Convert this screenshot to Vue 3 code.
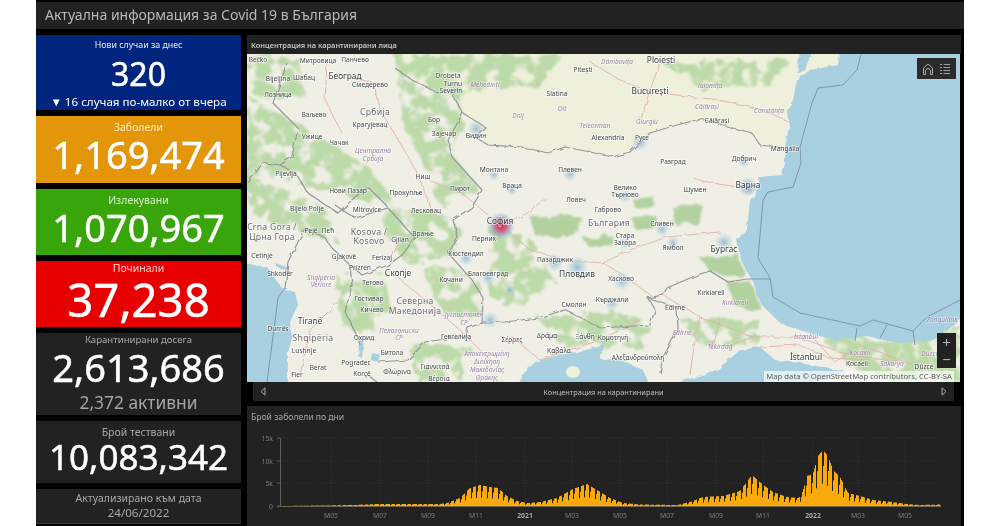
<script setup>
// числа от таблото
const cards = [
  { cls: 'blue', label: 'Нови случаи за днес', value: '320', sub: '▼ 16 случая по-малко от вчера' },
  { cls: 'orange', label: 'Заболели', value: '1,169,474' },
  { cls: 'green', label: 'Излекувани', value: '1,070,967' },
  { cls: 'red', label: 'Починали', value: '37,238' },
  { cls: 'dark quarantine', label: 'Карантинирани досега', value: '2,613,686', sub: '2,372 активни' },
  { cls: 'dark tested', label: 'Брой тествани', value: '10,083,342' },
]

// етикети на картата: x, y, текст, вид (c - град, b - голям, p - област)
const labels = [
  [258, 59, 'Bečko', 'c'], [318, 60, 'Митровица', 'c'], [355, 59, 'Панчево', 'c'], [345, 75, 'Београд', 'm'],
  [370, 84, 'Смедерево', 'c'], [278, 78, 'Bijeljina', 'c'], [304, 77, 'Шабац', 'c'], [278, 94, 'Лозница', 'c'],
  [314, 114, 'Ваљево', 'c'], [375, 112, 'Србија', 'b'], [370, 124, 'Крагујевац', 'c'], [312, 136, 'Ужице', 'c'],
  [339, 142, 'Чачак', 'c'], [373, 150, 'Централна', 'p'], [373, 158, 'Србија', 'p'], [423, 176, 'Ниш', 'c'],
  [406, 192, 'Прокупље', 'c'], [460, 188, 'Пирот', 'c'], [426, 210, 'Лесковац', 'c'], [348, 190, 'Нови Пазар', 'c'],
  [367, 209, 'Mitrovice', 'c'], [307, 208, 'Bijelo Polje', 'c'], [286, 173, 'Pljevlja', 'c'], [434, 119, 'Бор', 'c'],
  [444, 133, 'Зајечар', 'c'], [476, 135, 'Видин', 'c'], [448, 75, 'Drobeta', 'c'], [453, 83, 'Turnu', 'c'],
  [485, 84, 'Mehedinți', 'p'], [451, 90, 'Severin', 'c'], [518, 115, 'Dolj', 'p'], [557, 93, 'Slatina', 'c'],
  [562, 108, 'Olt', 'p'], [595, 125, 'Teleorman', 'p'], [608, 137, 'Alexandria', 'c'], [494, 169, 'Монтана', 'c'],
  [570, 169, 'Плевен', 'c'], [512, 185, 'Враца', 'c'], [576, 199, 'Ловеч', 'c'], [661, 59, 'Ploiești', 'm'],
  [617, 61, 'Dâmbovița', 'p'], [583, 69, 'Pitești', 'c'], [650, 90, 'București', 'm'], [710, 85, 'Ialomița', 'p'],
  [707, 106, 'Călărași', 'p'], [717, 120, 'Călărași', 'c'], [647, 121, 'Giurgiu', 'p'], [642, 137, 'Русе', 'c'],
  [673, 161, 'Разград', 'c'], [744, 158, 'Добрич', 'c'], [748, 184, 'Варна', 'm'], [625, 187, 'Велико', 'c'],
  [625, 194, 'Търново', 'c'], [695, 189, 'Шумен', 'c'], [785, 148, 'Mangalia', 'c'], [769, 110, 'Constanța', 'p'],
  [608, 209, 'Габрово', 'c'], [609, 223, 'България', 'b'], [662, 223, 'Сливен', 'c'], [625, 235, 'Стара', 'c'],
  [625, 242, 'Загора', 'c'], [673, 247, 'Ямбол', 'c'], [724, 248, 'Бургас', 'm'], [577, 273, 'Пловдив', 'm'],
  [555, 259, 'Пазарджик', 'c'], [621, 278, 'Хасково', 'c'], [612, 299, 'Кърджали', 'c'], [500, 220, 'София', 'm'],
  [484, 238, 'Перник', 'c'], [466, 253, 'Кюстендил', 'c'], [488, 273, 'Благоевград', 'c'], [574, 304, 'Смолян', 'c'],
  [272, 227, 'Crna Gora /', 'b'], [272, 237, 'Црна Гора', 'b'], [311, 230, 'Pejë', 'c'], [328, 230, 'Пећ', 'c'],
  [369, 232, 'Kosova /', 'b'], [369, 241, 'Kosovo', 'b'], [400, 239, 'Gjilan', 'c'], [423, 233, 'Врање', 'c'],
  [262, 255, 'Cetinje', 'c'], [344, 256, 'Gjakovë', 'c'], [382, 257, 'Ferizaj', 'c'], [360, 267, 'Prizren', 'c'],
  [398, 272, 'Скопје', 'm'], [280, 273, 'Shkodër', 'c'], [321, 277, 'Shqipëria', 'p'], [321, 284, 'Veriore', 'p'],
  [373, 282, 'Тетово', 'c'], [451, 279, 'Кочани', 'c'], [369, 298, 'Гостивар', 'c'], [415, 301, 'Северна', 'b'],
  [415, 311, 'Македонија', 'b'], [372, 309, 'Кичево', 'c'], [464, 314, 'Југоисточен', 'p'], [464, 322, 'СР', 'p'],
  [310, 320, 'Tiranë', 'm'], [278, 328, 'Durrës', 'c'], [313, 338, 'Shqipëria', 'b'], [399, 330, 'Пелагониски', 'p'],
  [399, 337, 'СР', 'p'], [364, 337, 'Охрид', 'c'], [456, 336, 'Гевгелија', 'c'], [304, 350, 'Lushnje', 'c'],
  [392, 352, 'Битола', 'c'], [318, 367, 'Berat', 'c'], [356, 362, 'Pogradec', 'c'], [435, 366, 'Γιαννιτσά', 'c'],
  [397, 371, 'Φλώρινα', 'c'], [297, 374, 'Fier', 'c'], [362, 373, 'Korçë', 'c'], [439, 378, 'Βέροια', 'c'],
  [487, 353, 'Αποκεντρωμένη', 'p'], [487, 361, 'Διοίκηση', 'p'], [487, 369, 'Μακεδονίας', 'p'], [487, 377, 'Θράκης', 'p'],
  [547, 335, 'Δράμα', 'c'], [585, 336, 'Ξάνθη', 'c'], [512, 339, 'Σέρρες', 'c'], [559, 350, 'Καβάλα', 'c'],
  [711, 292, 'Kırklareli', 'c'], [735, 302, 'Kırklareli', 'p'], [675, 307, 'Edirne', 'c'], [682, 332, 'Edirne', 'p'],
  [720, 346, 'Tekirdağ', 'p'], [613, 337, 'Κομοτηνή', 'c'], [638, 357, 'Αλεξανδρούπολη', 'c'], [806, 336, 'İstanbul', 'p'],
  [806, 356, 'İstanbul', 'm'], [860, 352, 'Kocaeli', 'p'], [857, 363, 'Kocaeli', 'c'], [892, 363, 'Sakarya', 'p'],
  [924, 366, 'Düzce', 'c'], [930, 353, 'Düzce', 'p'], [942, 319, 'Zonguldak', 'p'],
]

const greens = [
  'M395 54 L560 54 L540 85 L490 88 L458 92 L465 125 L448 150 L478 185 L440 205 L425 165 L405 130 L400 100Z',
  'M247 95 L300 125 L340 150 L380 175 L395 215 L345 195 L300 185 L247 175Z',
  'M247 54 L300 60 L305 95 L262 100 L247 90Z',
  'M247 175 L325 208 L340 245 L292 228 L250 218Z',
  'M385 205 L460 218 L455 255 L405 262 L385 235Z',
  'M335 275 L385 275 L390 305 L365 340 L340 325Z',
  'M420 265 L475 272 L485 320 L445 316Z',
  'M410 345 L470 345 L460 378 L415 380Z',
  'M490 228 L530 238 L556 282 L525 305 L492 300Z',
  'M660 62 L790 60 L770 85 L700 88Z',
  'M680 320 L760 320 L760 345 L700 345Z',
  'M820 340 L960 325 L960 382 L870 380Z',
  'M540 320 L610 310 L650 325 L640 345 L560 345Z',
]
const darks = [
  'M530 217 L580 216 L578 230 L560 238 L535 235Z',
  'M583 238 L612 236 L614 246 L590 248Z',
  'M632 217 L656 216 L655 228 L634 228Z',
  'M673 208 L703 205 L702 222 L675 224Z',
  'M633 200 L653 196 L652 207 L636 209Z',
  'M700 258 L740 255 L744 277 L710 272Z',
  'M727 284 L752 282 L762 312 L735 306Z',
]

const borders = [
  'M475 137 L488 145 L522 147 L548 153 L565 147 L590 152 L612 157 L630 152 L650 133 L677 125 L700 119 L717 123 L733 128 L752 133 L760 145 L785 148',
  'M395 68 L412 80 L438 93 L458 90 L452 95 L463 113 L485 127 L475 137',
  'M463 113 L448 140 L452 157 L482 190 L472 207 L453 220 L458 238 L448 253 L472 280 L483 298 L482 323 L505 322 L538 318 L565 310 L600 328 L650 325 L655 310 L648 298 L663 295 L667 288 L697 275 L710 271 L728 282 L747 279',
  'M648 298 L677 307 L678 330 L663 357 L660 373',
  'M482 323 L468 328 L466 336 L425 342 L408 360 L378 362',
  'M360 345 L358 338 L345 312 L352 285 L350 265 L332 248 L325 238 L305 228 L288 262 L285 288',
  'M248 183 L263 163 L280 165 L295 173 L308 193 L338 213 L355 197 L368 187 L388 207',
  'M287 63 L273 103 L298 128 L292 157 L280 165',
  'M335 205 L355 218 L388 208 L415 238 L402 255 L388 265 L362 275 L350 265',
  'M368 375 L377 382',
]
const seaLines = [
  'M861 54 L857 70 L843 85 L818 88 L812 103 L800 147 L801 163 L793 187 L768 192 L763 200 L758 258 L770 278 L773 297 L800 313 L860 326 L873 320 L913 331 L927 317 L960 300',
  'M747 279 L770 279',
  'M285 288 L278 298 L267 382',
  'M857 328 L855 341 M887 325 L880 338 M913 331 L915 345',
]
const roads = [
  'M327 63 L325 100 L342 133', 'M345 75 L373 83 L382 113 L412 163 L420 180 L430 207 L437 217',
  'M423 178 L462 193 L488 215', 'M507 230 L530 250 L563 260 L603 263 L620 273 L653 297 L663 295',
  'M603 263 L630 250 L667 237 L720 232', 'M507 225 L527 213 L543 200 L548 200',
  'M693 179 L713 183 L737 187', 'M663 295 L700 317 L753 337 L797 337 L850 355 L933 367',
  'M590 62 L620 80 L650 92 L720 100 L763 110 L790 122', 'M650 90 L640 122', 'M661 60 L650 90',
  'M760 347 L800 345 L830 358 L870 360', 'M700 317 L695 340 L690 375', 'M720 320 L712 350', 'M753 337 L730 345',
  'M395 275 L425 300 L460 330 L490 360', 'M400 240 L388 265', 'M510 335 L540 360 L600 340 L640 320',
  'M300 375 L310 330 L340 300', 'M815 340 L835 362 L860 345 L905 362',
]
const spots = [
  [501, 226, 14, 'hr'], [577, 267, 12, 'hb'], [748, 187, 10, 'hp'], [724, 242, 10, 'hb'], [640, 143, 9, 'hb'],
  [476, 129, 9, 'hb'], [494, 175, 6, 'hb'], [570, 174, 8, 'hb'], [512, 190, 6, 'hb'], [555, 263, 9, 'hb'],
  [622, 281, 10, 'hb'], [612, 303, 8, 'hb'], [662, 229, 8, 'hb'], [673, 243, 7, 'hb'], [625, 196, 7, 'hb'],
  [744, 162, 6, 'hb'], [466, 258, 8, 'hb'], [488, 278, 8, 'hb'], [625, 243, 7, 'hb'], [490, 320, 9, 'hb'], [510, 290, 6, 'hb'],
]

// контролни точки за графиката: x в пиксели, височина в пиксели
const env = [
  [281, 0], [330, 0.6], [353, 1], [377, 2], [406, 2], [440, 2], [447, 3], [460, 8], [470, 18], [480, 21], [490, 19],
  [498, 18], [507, 10], [517, 5], [527, 3], [540, 4], [557, 8], [573, 17], [587, 22], [597, 16], [610, 8], [623, 3],
  [640, 1.5], [677, 1], [690, 4], [703, 9], [723, 10], [740, 15], [752, 31], [762, 22], [773, 14], [787, 9], [799, 8],
  [803, 15], [807, 30], [813, 32], [818, 50], [823, 56], [828, 50], [833, 36], [840, 29], [848, 13], [860, 10], [873, 6],
  [893, 4], [907, 2], [920, 1], [941, 1.5],
]
function envAt(x) {
  for (let i = 1; i < env.length; i++) {
    if (x <= env[i][0]) {
      const [x0, h0] = env[i - 1]
      const [x1, h1] = env[i]
      return h0 + ((h1 - h0) * (x - x0)) / (x1 - x0)
    }
  }
  return 0
}
let bars = ''
for (let x = 281; x < 941; x++) {
  const phase = (x - 281) % 5.4
  let k = 1
  if (phase < 1) k = 0.4
  else if (phase < 2) k = 0.72
  bars += `M${x} 506v${-(envAt(x + 0.5) * k).toFixed(1)}h1V506Z`
}

const yTicks = [[438, '15k'], [461, '10k'], [483, '5k'], [506, '0']]
const xTicks = [
  [331, 'M05'], [380, 'M07'], [428, 'M09'], [476, 'M11'], [525, '2021', true], [572, 'M03'], [620, 'M05'],
  [667, 'M07'], [716, 'M09'], [763, 'M11'], [813, '2022', true], [858, 'M03'], [905, 'M05'],
]
</script>

<template>
  <div class="page">
    <div class="dash">
      <header class="title">Актуална информация за Covid 19 в България</header>
      <div class="main">
        <aside class="side">
          <div v-for="c in cards" :key="c.label" class="card" :class="c.cls">
            <div class="label">{{ c.label }}</div>
            <div class="value">{{ c.value }}</div>
            <div v-if="c.sub" class="sub">{{ c.sub }}</div>
          </div>
          <div class="card dark updated">
            <div class="label">Актуализирано към дата</div>
            <div class="date">24/06/2022</div>
          </div>
        </aside>

        <section class="right">
          <div class="map-panel">
            <div class="panel-head">Концентрация на карантинирани лица</div>
            <div class="map">
              <svg class="map-svg" viewBox="247 54 713 328" width="713" height="328">
                <defs>
                  <filter id="mottle" x="-5%" y="-5%" width="110%" height="110%">
                    <feTurbulence type="fractalNoise" baseFrequency="0.07" numOctaves="3" seed="7" result="noise" />
                    <feDisplacementMap in="SourceGraphic" in2="noise" scale="16" result="shape" />
                    <feColorMatrix
                      in="noise"
                      type="matrix"
                      values="0 0 0 0 0  0 0 0 0 0  0 0 0 0 0  6 0 0 0 -2.1"
                      result="mask"
                    />
                    <feComposite in="shape" in2="mask" operator="in" />
                    <feGaussianBlur stdDeviation="0.9" />
                  </filter>
                  <filter id="rough" x="-5%" y="-5%" width="110%" height="110%">
                    <feTurbulence type="fractalNoise" baseFrequency="0.09" numOctaves="3" seed="11" result="noise" />
                    <feDisplacementMap in="SourceGraphic" in2="noise" scale="9" />
                    <feGaussianBlur stdDeviation="1" />
                  </filter>
                  <filter id="wiggle" x="-5%" y="-5%" width="110%" height="110%">
                    <feTurbulence type="fractalNoise" baseFrequency="0.12" numOctaves="2" seed="3" result="noise" />
                    <feDisplacementMap in="SourceGraphic" in2="noise" scale="4" />
                  </filter>
                  <radialGradient id="hb">
                    <stop offset="0" stop-color="#7fb0cc" stop-opacity=".75" />
                    <stop offset="1" stop-color="#a6cfe0" stop-opacity="0" />
                  </radialGradient>
                  <radialGradient id="hp">
                    <stop offset="0" stop-color="#8d8fc0" stop-opacity=".9" />
                    <stop offset=".5" stop-color="#86aecb" stop-opacity=".6" />
                    <stop offset="1" stop-color="#a6cfe0" stop-opacity="0" />
                  </radialGradient>
                  <radialGradient id="hr">
                    <stop offset="0" stop-color="#d1294f" />
                    <stop offset=".4" stop-color="#c85a7e" stop-opacity=".9" />
                    <stop offset=".7" stop-color="#8aa0c4" stop-opacity=".55" />
                    <stop offset="1" stop-color="#a6cfe0" stop-opacity="0" />
                  </radialGradient>
                </defs>

                <rect x="247" y="54" width="713" height="328" fill="#f0efe6" />
                <!-- Румъния по-жълтеникава -->
                <path d="M475 54 L841 54 L838 65 L797 80 L787 110 L785 148 L760 145 L752 133 L700 119 L650 133 L630 152 L590 152 L548 153 L488 145 L465 112 L452 90 L412 80 L395 68 L400 54Z" fill="#eef0dc" />

                <g filter="url(#mottle)">
                  <path v-for="d in greens" :key="d" :d="d" fill="#bcd9a8" />
                </g>
                <g filter="url(#rough)">
                  <path v-for="d in darks" :key="d" :d="d" fill="#b2d19f" />
                </g>

                <!-- море -->
                <g filter="url(#wiggle)" fill="#a9d0e0">
                  <path d="M841 50 L838 65 L810 70 L797 80 L793 100 L787 110 L789 127 L785 147 L785 163 L782 175 L760 177 L755 197 L750 200 L747 230 L737 240 L740 257 L753 283 L760 303 L780 323 L800 330 L833 340 L867 337 L900 343 L933 340 L965 317 L965 50Z" />
                  <path d="M760 347 L740 350 L717 370 L667 386 L800 386 L847 372 L800 363 L775 360Z" />
                  <path d="M605 345 L578 352 L558 355 L535 362 L522 375 L515 386 L650 386 L643 370 L620 360 L600 359Z" />
                  <path d="M240 262 L268 268 L282 288 L295 292 L298 305 L290 322 L292 338 L288 352 L288 386 L240 386Z" />
                  <path d="M275 262 L288 268 L284 271 L276 266Z" />
                  <path d="M360 340 L364 340 L362 358 L358 356Z" />
                  <path d="M372 352 L380 354 L378 362 L371 360Z" />
                  <path d="M800 50 L812 50 L805 70 L797 74Z" />
                </g>
                <ellipse cx="573" cy="372" rx="7" ry="6" fill="#eef0de" />

                <g filter="url(#wiggle)" fill="none">
                  <path v-for="d in roads" :key="d" :d="d" stroke="#e2b0ad" stroke-width=".9" />
                  <path v-for="d in borders" :key="d" :d="d" stroke="#94979a" stroke-width="1.2" />
                </g>
                <path v-for="d in seaLines" :key="d" :d="d" fill="none" stroke="#7f98ab" stroke-width="1" />

                <circle v-for="s in spots" :key="s[0] + '-' + s[1]" :cx="s[0]" :cy="s[1]" :r="s[2]" :fill="`url(#${s[3]})`" />

                <text
                  v-for="l in labels"
                  :key="l[0] + l[2]"
                  :x="l[0]"
                  :y="l[1]"
                  :class="'lb-' + l[3]"
                  text-anchor="middle"
                  dominant-baseline="central"
                >{{ l[2] }}</text>
              </svg>

              <div class="tools">
                <svg width="14" height="14" viewBox="0 0 14 14" fill="none" stroke="#a8a8a8" stroke-width="1">
                  <path d="M2.5 12.5 V6 L7 2 L11.5 6 V12.5 H9.5 V9 A2.5 2.5 0 0 0 4.5 9 V12.5Z" />
                </svg>
                <svg width="14" height="14" viewBox="0 0 14 14" fill="none" stroke="#a0a0a0" stroke-width="1">
                  <path d="M2 2.5 H4 M2 5.5 H4 M2 8.5 H4 M2 11.5 H4 M5.5 2.5 H12 M5.5 5.5 H12 M5.5 8.5 H12 M5.5 11.5 H12" />
                </svg>
              </div>
              <div class="zoom">
                <span>+</span>
                <span>−</span>
              </div>
              <div class="attr">Map data © OpenStreetMap contributors, CC-BY-SA</div>
            </div>
            <div class="carousel">
              <svg width="6" height="9" viewBox="0 0 6 9" fill="none" stroke="#a8a8a8"><path d="M5 .8 V8.2 L1 4.5Z" /></svg>
              <span>Концентрация на карантинирани</span>
              <svg width="6" height="9" viewBox="0 0 6 9" fill="none" stroke="#a8a8a8"><path d="M1 .8 V8.2 L5 4.5Z" /></svg>
            </div>
          </div>

          <div class="chart-panel">
            <div class="chart-title">Брой заболели по дни</div>
            <svg class="chart" width="714" height="120" viewBox="247 406 714 120">
              <line
                v-for="t in xTicks"
                :key="t[1] + t[0]"
                :x1="t[0]"
                :x2="t[0]"
                y1="438"
                y2="506"
                stroke="#3a3a3a"
                stroke-width=".7"
                stroke-dasharray="1 2"
              />
              <line
                v-for="t in yTicks.slice(0, 3)"
                :key="t[1]"
                x1="281"
                x2="941"
                :y1="t[0]"
                :y2="t[0]"
                stroke="#3a3a3a"
                stroke-width=".7"
                stroke-dasharray="1 2"
              />
              <line x1="280.5" x2="280.5" y1="438" y2="506" stroke="#5c5c5c" />
              <line x1="277" x2="941" y1="506.5" y2="506.5" stroke="#77674a" />
              <line v-for="t in yTicks" :key="'m' + t[1]" x1="277" x2="280" :y1="t[0]" :y2="t[0]" stroke="#5c5c5c" />
              <path :d="bars" fill="#fba90c" />
              <text v-for="t in yTicks" :key="'y' + t[1]" x="273" :y="t[0]" class="tick" text-anchor="end" dominant-baseline="central">{{ t[1] }}</text>
              <text
                v-for="t in xTicks"
                :key="'x' + t[1] + t[0]"
                :x="t[0]"
                y="515"
                class="tick"
                :class="{ year: t[2] }"
                text-anchor="middle"
                dominant-baseline="central"
              >{{ t[1] }}</text>
            </svg>
          </div>
        </section>
      </div>
    </div>
  </div>
</template>

<style>
html,
body {
  margin: 0;
  background: #fff;
}
</style>

<style scoped>
.page {
  width: 1000px;
  height: 526px;
  overflow: hidden;
  background: #fff;
  font-family: "Noto Sans", "Open Sans", sans-serif;
}
.dash {
  width: 928px;
  height: 526px;
  margin-left: 36px;
  background: #000;
  overflow: hidden;
  filter: blur(0.4px);
}
.title {
  margin-top: 2px;
  height: 27px;
  padding-left: 9px;
  background: #222;
  color: #b9b9b9;
  font-size: 14px;
  line-height: 26px;
}
.main {
  display: flex;
  gap: 6px;
  margin-top: 6px;
}

/* левата колона */
.side {
  width: 205px;
  display: flex;
  flex-direction: column;
  gap: 6px;
}
.card {
  text-align: center;
  color: #fff;
}
.label {
  font-size: 10.5px;
  line-height: 14px;
  padding-top: 4px;
  opacity: 0.8;
}
.value {
  font-size: 38px;
  font-weight: 400;
  -webkit-text-stroke: 0.5px currentColor;
  line-height: 42px;
  margin-top: -1px;
}
.blue {
  height: 75px;
  background: #00257e;
}
.blue .label {
  font-size: 8.8px;
  line-height: 12px;
  opacity: 0.9;
}
.blue .value {
  font-size: 32px;
  line-height: 36px;
  margin-top: 5px;
}
.blue .sub {
  font-size: 11.6px;
  line-height: 15px;
  margin-top: 2px;
}
.orange {
  height: 67px;
  background: #e4960a;
}
.green {
  height: 66px;
  background: #38a50b;
}
.red {
  height: 66px;
  background: #e60000;
}
.red .label {
  padding-top: 0;
}
.red .value {
  font-size: 45.5px;
  line-height: 44px;
  margin-top: 2px;
}
.dark {
  background: #222;
}
.dark .label {
  color: #a8a8a8;
  opacity: 1;
}
.dark .value {
  color: #fff;
}
.quarantine {
  height: 82px;
}
.quarantine .label {
  font-size: 9.6px;
  padding-top: 0;
}
.quarantine .value {
  margin-top: -1px;
}
.quarantine .sub {
  color: #a5a5a5;
  font-size: 17.4px;
  line-height: 24px;
  margin-top: 2px;
}
.tested {
  height: 62px;
}
.tested .value {
  font-size: 35px;
  margin-top: -3px;
}
.updated {
  height: 34px;
  border-bottom: 1px solid #3b3b3b;
}
.updated .label {
  padding-top: 2px;
}
.date {
  color: #a8a8a8;
  font-size: 11.6px;
  line-height: 14px;
  margin-top: 1px;
}

/* дясната колона */
.right {
  width: 714px;
  display: flex;
  flex-direction: column;
  gap: 5px;
}
.panel-head {
  height: 19px;
  background: #222;
  color: #c6c6c6;
  font-size: 7.4px;
  font-weight: 600;
  line-height: 20px;
  padding-left: 4px;
}
.map {
  position: relative;
  width: 713px;
  height: 328px;
  overflow: hidden;
}
.map-svg {
  display: block;
}
.lb-c {
  font-size: 6.6px;
  fill: #44484c;
  stroke: #fff;
  stroke-width: 1.6px;
  stroke-opacity: 0.55;
  paint-order: stroke;
}
.lb-m {
  font-size: 8.4px;
  fill: #3f4347;
  stroke: #fff;
  stroke-width: 1.8px;
  stroke-opacity: 0.55;
  paint-order: stroke;
}
.lb-b {
  font-size: 8.6px;
  fill: #6c6f78;
  letter-spacing: 0.3px;
  stroke: #fff;
  stroke-width: 1.6px;
  stroke-opacity: 0.45;
  paint-order: stroke;
}
.lb-p {
  font-size: 6.6px;
  font-style: italic;
  fill: #9d84ac;
  stroke: #fff;
  stroke-width: 1.4px;
  stroke-opacity: 0.4;
  paint-order: stroke;
}
.tools {
  position: absolute;
  top: 4px;
  right: 4px;
  width: 39px;
  height: 21px;
  background: #2b2b2b;
  display: flex;
  align-items: center;
  justify-content: space-around;
  padding: 0 2px;
  box-sizing: border-box;
}
.zoom {
  position: absolute;
  top: 279px;
  right: 4px;
  width: 19px;
  height: 35px;
  background: #222;
  color: #b5b5b5;
  display: flex;
  flex-direction: column;
  align-items: center;
  justify-content: space-around;
  font-size: 15px;
  line-height: 16px;
}
.attr {
  position: absolute;
  right: 6px;
  bottom: 0;
  height: 11px;
  padding: 0 2px;
  background: rgba(255, 255, 255, 0.65);
  color: #606060;
  font-size: 7.7px;
  line-height: 11px;
  white-space: nowrap;
}
.carousel {
  height: 19px;
  margin: 0 7px 0 6px;
  padding: 0 7px;
  background: #222;
  color: #bdbdbd;
  font-size: 7.4px;
  display: flex;
  align-items: center;
  justify-content: space-between;
}
.chart-panel {
  position: relative;
  height: 120px;
  background: #222;
}
.chart-title {
  position: absolute;
  top: 5px;
  left: 4px;
  color: #a8a8a8;
  font-size: 8.6px;
  line-height: 12px;
}
.chart {
  display: block;
}
.tick {
  font-size: 6.8px;
  fill: #7d7d7d;
}
.year {
  fill: #a5a5a5;
  font-weight: 700;
}
</style>
